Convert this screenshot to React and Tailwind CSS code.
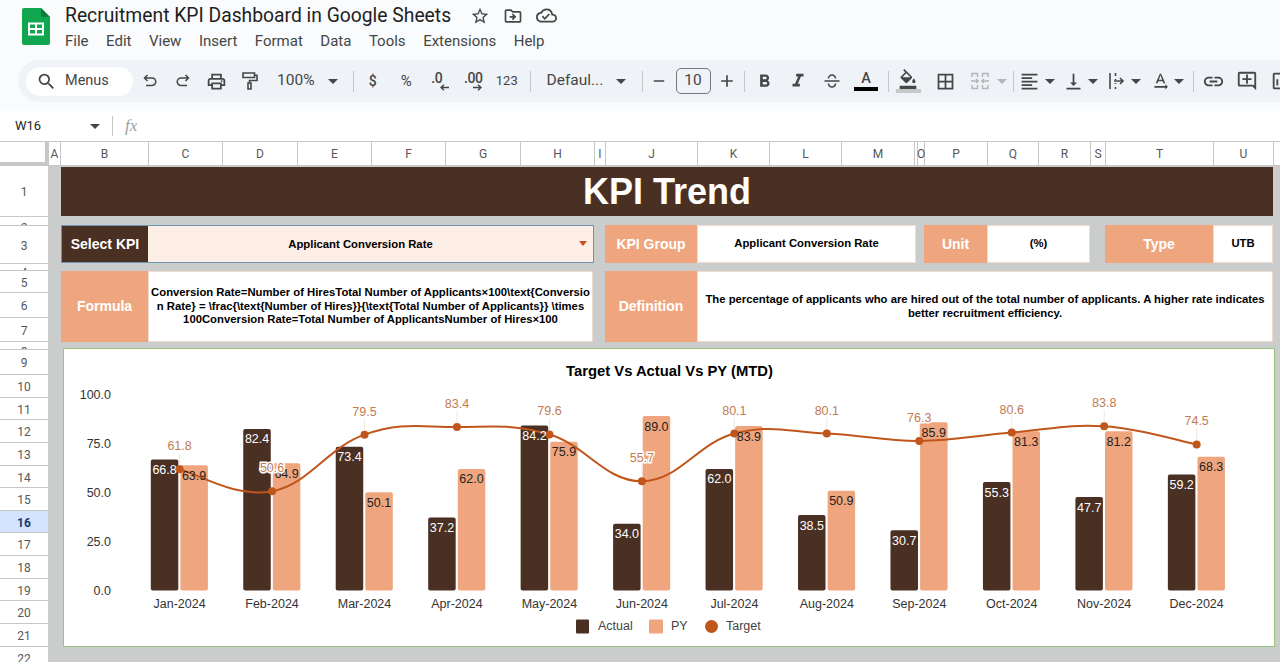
import {
  MdSearch, MdOutlinePrint, MdFormatBold, MdFormatItalic,
  MdOutlineFormatColorFill, MdBorderAll, MdFormatAlignLeft, MdVerticalAlignBottom, MdTextRotationNone, MdLink,
  MdOutlineAddComment, MdOutlineInsertChart, MdStarBorder, MdOutlineDriveFileMove, MdOutlineCloudDone, MdAdd, MdRemove,
} from 'react-icons/md';

const menus = ['File', 'Edit', 'View', 'Insert', 'Format', 'Data', 'Tools', 'Extensions', 'Help'];

const columns = [
  ['A', 12], ['B', 88], ['C', 74], ['D', 75], ['E', 74], ['F', 74], ['G', 75], ['H', 74], ['I', 11], ['J', 92],
  ['K', 72], ['L', 72], ['M', 73], ['', 3], ['O', 7], ['P', 63], ['Q', 51], ['R', 52], ['S', 15], ['T', 108], ['U', 60], ['', 10],
];

const rows = [
  [1, 51], [2, 9], [3, 38], [4, 7], [5, 22], [6, 25], [7, 24], [8, 8], [9, 25], [10, 23], [11, 22], [12, 23], [13, 23],
  [14, 22], [15, 23], [16, 22], [17, 23], [18, 23], [19, 22], [20, 23], [21, 23], [22, 22],
];

const months = ['Jan', 'Feb', 'Mar', 'Apr', 'May', 'Jun', 'Jul', 'Aug', 'Sep', 'Oct', 'Nov', 'Dec'];
const actual = [66.8, 82.4, 73.4, 37.2, 84.2, 34.0, 62.0, 38.5, 30.7, 55.3, 47.7, 59.2];
const py = [63.9, 64.9, 50.1, 62.0, 75.9, 89.0, 83.9, 50.9, 85.9, 81.3, 81.2, 68.3];
const target = [61.8, 50.6, 79.5, 83.4, 79.6, 55.7, 80.1, 80.1, 76.3, 80.6, 83.8, 74.5];

const catX = (i) => 179.6 + 92.46 * i;
const valY = (v) => 590 - 1.96 * v;

function curvePath() {
  const pts = target.map((v, i) => [catX(i), valY(v)]);
  let d = `M${pts[0][0]} ${pts[0][1]}`;
  for (let i = 0; i < pts.length - 1; i++) {
    const p0 = pts[i - 1] || pts[i];
    const p1 = pts[i];
    const p2 = pts[i + 1];
    const p3 = pts[i + 2] || p2;
    const c1 = [p1[0] + (p2[0] - p0[0]) / 5, p1[1] + (p2[1] - p0[1]) / 5];
    const c2 = [p2[0] - (p3[0] - p1[0]) / 5, p2[1] - (p3[1] - p1[1]) / 5];
    d += ` C${c1[0]} ${c1[1]} ${c2[0]} ${c2[1]} ${p2[0]} ${p2[1]}`;
  }
  return d;
}

function Caret({ className = 'text-[#444746]' }) {
  return (
    <span className={`flex w-[10px] shrink-0 justify-center ${className}`}>
      <svg width="10" height="5" viewBox="0 0 10 5"><path d="M0 0h10L5 5z" fill="currentColor" /></svg>
    </span>
  );
}

function Tool({ children, w = 'w-[33.5px]' }) {
  return <div className={`flex h-full shrink-0 items-center justify-center text-[#444746] ${w}`}>{children}</div>;
}

function Sep({ className }) {
  return <div className={`h-[21px] w-px shrink-0 bg-[#c7c7c7] ${className}`} />;
}

function Toolbar() {
  return (
    <div className="ml-[18px] flex h-[42px] w-[1300px] items-center rounded-l-[21px] bg-[#eff3f8] pl-2 font-[Roboto,sans-serif]">
      <div className="flex h-[29px] w-[107px] shrink-0 items-center rounded-full bg-white pl-[10px] text-[#444746]">
        <MdSearch size={21} />
        <span className="ml-[8px] text-[14.5px]">Menus</span>
      </div>
      <Tool>
        <svg width="18" height="18" viewBox="0 0 18 18" fill="none" stroke="currentColor" strokeWidth="1.5">
          <path d="M6.5 3 3.5 6l3 3M3.5 6H11a3.6 3.6 0 0 1 0 7.5H5" />
        </svg>
      </Tool>
      <Tool>
        <svg width="18" height="18" viewBox="0 0 18 18" fill="none" stroke="currentColor" strokeWidth="1.5">
          <path d="M11.5 3l3 3-3 3M14.5 6H7a3.6 3.6 0 0 0 0 7.5h6" />
        </svg>
      </Tool>
      <Tool><MdOutlinePrint size={21} /></Tool>
      <Tool>
        <svg width="20" height="20" viewBox="0 0 20 20" fill="none" stroke="currentColor" strokeWidth="1.6">
          <path d="M3 2h11.5v4.5H3zM14.5 4.2H17v5.3H9.5v2.5M8 12h3v6H8z" />
        </svg>
      </Tool>
      <div className="flex w-[82px] shrink-0 items-center pl-[10px] text-[15.5px] text-[#444746]">
        <span className="w-[51px]">100%</span>
        <Caret />
      </div>
      <Sep className="ml-1 mr-[2px]" />
      <Tool><span className="text-[14px] font-medium">$</span></Tool>
      <Tool><span className="text-[15px]">%</span></Tool>
      <Tool>
        <span className="relative -ml-[6px] -mt-[6px] text-[14px] font-medium tracking-[-0.5px]">
          .0
          <svg className="absolute -right-[7px] top-[16px]" width="9" height="7" viewBox="0 0 9 7"><path d="M9 3.5H2M4 .8 1 3.5 4 6.2" fill="none" stroke="currentColor" strokeWidth="1.5" /></svg>
        </span>
      </Tool>
      <Tool>
        <span className="relative -mt-[6px] text-[14px] font-medium tracking-[-0.5px]">
          .00
          <svg className="absolute right-0 top-[16px]" width="9" height="7" viewBox="0 0 9 7"><path d="M0 3.5h7M5 .8l3 2.7-3 2.7" fill="none" stroke="currentColor" strokeWidth="1.5" /></svg>
        </span>
      </Tool>
      <Tool><span className="text-[13px]">123</span></Tool>
      <Sep className="ml-[6px] mr-1" />
      <div className="flex w-[103px] shrink-0 items-center justify-between pl-3 pr-[12px] text-[15.5px] text-[#444746]">
        <span>Defaul...</span>
        <Caret />
      </div>
      <Sep className="ml-1" />
      <Tool w="w-[33px]"><MdRemove size={18} /></Tool>
      <div className="flex h-[26px] w-[35px] shrink-0 items-center justify-center rounded-[5px] border border-[#747775] text-[15.5px] text-[#444746]">10</div>
      <Tool w="w-[33px]"><MdAdd size={20} /></Tool>
      <Sep className="mr-[2.5px]" />
      <Tool w="w-[34px]"><MdFormatBold size={21} /></Tool>
      <Tool w="w-[34px]"><MdFormatItalic size={22} /></Tool>
      <Tool w="w-[34px]">
        <svg width="18" height="18" viewBox="0 0 18 18" fill="none" stroke="currentColor" strokeWidth="1.6">
          <path d="M1.5 9h15M5.5 6.5a3.5 3.5 0 0 1 7 0M5.5 11.5a3.5 3.5 0 0 0 7 0" />
        </svg>
      </Tool>
      <Tool w="w-[34px]">
        <div className="flex w-[24px] flex-col items-center">
          <span className="text-[14.5px] font-medium leading-[16px]">A</span>
          <div className="h-[4px] w-[24px] bg-black" />
        </div>
      </Tool>
      <Sep className="ml-[5px] mr-[2px]" />
      <Tool w="w-[34px]">
        <div className="flex w-[25px] flex-col items-center">
          <MdOutlineFormatColorFill size={20} />
          <div className="h-[4px] w-[25px] bg-[#c7c7c7]" />
        </div>
      </Tool>
      <Tool w="w-[34px] ml-[3px]"><MdBorderAll size={21} /></Tool>
      <Tool w="w-[34px] ml-px">
        <svg width="20" height="20" viewBox="0 0 20 20" fill="none" stroke="#b4b6b8" strokeWidth="1.5">
          <path d="M2 6V2.5h5.5V6M2 9v2M2 14v3.5h5.5V14M18 6V2.5h-5.5V6M18 9v2M18 14v3.5h-5.5V14M2 10h6M6 8l2.2 2L6 12M18 10h-6M14 8l-2.2 2 2.2 2" />
        </svg>
      </Tool>
      <Caret className="text-[#b4b6b8]" />
      <Sep className="ml-[6px]" />
      <Tool w="w-[31px]"><MdFormatAlignLeft size={21} /></Tool>
      <Caret />
      <Tool w="w-[30px] ml-[3px]"><MdVerticalAlignBottom size={21} /></Tool>
      <Caret />
      <Tool w="w-[29px] ml-1">
        <svg width="18" height="18" viewBox="0 0 18 18" fill="none" stroke="currentColor" strokeWidth="1.6">
          <path d="M2 1v16M7.5 1v3M7.5 7v1M7.5 11v1M7.5 15v2M6 9h9M12 6l3 3-3 3" />
        </svg>
      </Tool>
      <Caret />
      <Tool w="w-[28px] ml-[5px]"><MdTextRotationNone size={21} /></Tool>
      <Caret />
      <Sep className="ml-[9px] mr-[2px]" />
      <Tool w="w-[34px]"><MdLink size={23} /></Tool>
      <Tool w="w-[34px]"><MdOutlineAddComment size={22} /></Tool>
      <Tool w="w-[34px]"><MdOutlineInsertChart size={22} /></Tool>
    </div>
  );
}

function Header() {
  return (
    <div className="h-[111px] bg-[#f9fbfd] pt-[8px]">
      <div className="flex h-[37px] pl-[22px]">
        <svg width="28" height="37" viewBox="0 0 28 37" className="shrink-0">
          <path d="M2 0h17l9 9v26a2 2 0 0 1-2 2H2a2 2 0 0 1-2-2V2a2 2 0 0 1 2-2z" fill="#11a650" />
          <path d="M19 0l9 9h-9z" fill="#0c7f3d" />
          <path d="M7 15.5h14v11H7z" fill="none" stroke="#fff" strokeWidth="2" />
          <path d="M14 15.5v11M7 21h14" stroke="#fff" strokeWidth="2" />
        </svg>
        <div className="ml-[15px] -mt-[3px]">
          <div className="flex items-center text-[#444746]">
            <span className="font-[Roboto,sans-serif] text-[19.3px] leading-[16px] text-[#1f1f1f]">Recruitment KPI Dashboard in Google Sheets</span>
            <MdStarBorder size={20} className="ml-[19px]" />
            <MdOutlineDriveFileMove size={20} className="ml-[13px]" />
            <MdOutlineCloudDone size={21} className="ml-[13px]" />
          </div>
          <div className="mt-[5px] flex gap-[17.5px] font-[Roboto,sans-serif] text-[15px] leading-[20px] text-[#444746]">
            {menus.map((m) => <span key={m}>{m}</span>)}
          </div>
        </div>
      </div>
      <div className="mt-[15px]"><Toolbar /></div>
    </div>
  );
}

function FormulaBar() {
  return (
    <div className="flex h-[30px] items-center bg-white font-[Roboto,sans-serif] text-[#444746]">
      <span className="ml-[15px] w-[75px] text-[13px] text-[#1f1f1f]">W16</span>
      <Caret />
      <div className="ml-[12px] h-[20px] w-px bg-[#c7c7c7]" />
      <span className="ml-[12px] font-['Liberation_Serif',serif] text-[17px] italic text-[#9aa0a6]">fx</span>
    </div>
  );
}

function ColumnHeader() {
  return (
    <div className="flex h-[25px] border-y border-[#c7c7c7] bg-white font-[Roboto,sans-serif] text-[12px] text-[#575757]">
      <div className="w-[45px] shrink-0 border-b-[3px] border-[#c7c7c7]" />
      <div className="w-[4px] shrink-0 bg-[#c7c7c7]" />
      {columns.map(([name, w], i) => (
        <div key={i} className="flex shrink-0 items-center justify-center border-r border-[#c7c7c7]" style={{ width: w }}>
          {name}
        </div>
      ))}
    </div>
  );
}

function RowHeader() {
  return (
    <div className="w-[48px] shrink-0 bg-white font-[Roboto,sans-serif] text-[12px] text-[#575757]">
      {rows.map(([n, h]) => (
        <div
          key={n}
          className={`flex justify-center overflow-hidden border-b border-[#c7c7c7] ${h < 10 ? 'items-start' : 'items-center'} ${n === 16 ? 'bg-[#d3e3fd] font-bold text-[#1b3a6b]' : ''}`}
          style={{ height: h, paddingTop: h < 10 ? h - 7 : 2 }}
        >
          {n}
        </div>
      ))}
    </div>
  );
}

function Label({ children, className }) {
  return <div className={`flex shrink-0 items-center justify-center bg-[#efa67f] text-[14px] font-bold text-white ${className}`}>{children}</div>;
}

function Value({ children, className }) {
  return <div className={`flex items-center justify-center border border-[#efdccf] bg-white text-center text-[11.3px] font-bold leading-[13.5px] text-black ${className}`}>{children}</div>;
}

function Chart() {
  return (
    <div className="ml-[2px] mt-[6px] h-[299px] w-[1212px] border border-[#98c47c] bg-white">
      <svg width="1210" height="297" viewBox="64 348.5 1210 297" className="block" fontFamily="'Liberation Sans', sans-serif" fontSize="12.5">
        <text x="669.5" y="370" textAnchor="middle" dominantBaseline="central" fontSize="14.8" fontWeight="700" fill="#000">Target Vs Actual Vs PY (MTD)</text>

        {[100, 75, 50, 25, 0].map((v) => (
          <text key={v} x="111" y={valY(v)} textAnchor="end" dominantBaseline="central" fill="#333">{v.toFixed(1)}</text>
        ))}

        {months.map((m, i) => (
          <g key={m}>
            <rect x={catX(i) - 28.8} y={valY(actual[i])} width="27.5" height={actual[i] * 1.96} rx="2" fill="#4a2f23" />
            <rect x={catX(i) + 0.8} y={valY(py[i])} width="27.5" height={py[i] * 1.96} rx="2" fill="#efa67f" />
            <text x={catX(i)} y="603" textAnchor="middle" dominantBaseline="central" fill="#333">{m}-2024</text>
            <line x1={catX(i)} x2={catX(i)} y1={valY(target[i]) - 16} y2={valY(target[i])} stroke="#e9d6ca" strokeWidth="0.6" />
          </g>
        ))}

        <path d={curvePath()} fill="none" stroke="#c0561c" strokeWidth="2" />
        {target.map((v, i) => <circle key={i} cx={catX(i)} cy={valY(v)} r="4" fill="#c0561c" />)}

        {months.map((m, i) => (
          <g key={m}>
            <text x={catX(i) - 15} y={valY(actual[i]) + 10.5} textAnchor="middle" dominantBaseline="central" fill="#fff">{actual[i].toFixed(1)}</text>
            <text x={catX(i) + 14.5} y={valY(py[i]) + 10.5} textAnchor="middle" dominantBaseline="central" fill="#222">{py[i].toFixed(1)}</text>
            <text x={catX(i)} y={valY(target[i]) - 23} textAnchor="middle" dominantBaseline="central" fill="#c27b54" stroke="#fff" strokeWidth="3" paintOrder="stroke">{target[i].toFixed(1)}</text>
          </g>
        ))}

        <rect x="576" y="619" width="13" height="14" rx="1" fill="#4a2f23" />
        <text x="598" y="625.5" dominantBaseline="central" fill="#444">Actual</text>
        <rect x="649" y="619" width="14" height="14" rx="1" fill="#efa67f" />
        <text x="671" y="625.5" dominantBaseline="central" fill="#444">PY</text>
        <circle cx="711.5" cy="626" r="6.5" fill="#c0561c" />
        <text x="726" y="625.5" dominantBaseline="central" fill="#444">Target</text>
      </svg>
    </div>
  );
}

function Dashboard() {
  return (
    <div className="w-[1232px] shrink-0 bg-[#cbcccc] pl-[13px] pt-px font-['Liberation_Sans',sans-serif]">
      <div className="flex h-[49px] w-[1212px] items-center justify-center bg-[#4a2f23] text-[36px] font-bold text-white">KPI Trend</div>

      <div className="mt-[9px] flex h-[38px] w-[1212px]">
        <div className="flex w-[533px] shrink-0 border border-[#6b93b8]">
          <div className="flex w-[86px] shrink-0 items-center justify-center bg-[#4a2f23] text-[14px] font-bold text-white">Select KPI</div>
          <div className="relative flex grow items-center justify-center bg-[#fdeee6] pr-[20px] text-[11.3px] font-bold text-black">
            Applicant Conversion Rate
            <span className="absolute right-[6px] top-[15px] text-[#d0491c]">
              <svg width="8" height="5" viewBox="0 0 8 5" className="block"><path d="M0 0h8L4 5z" fill="currentColor" /></svg>
            </span>
          </div>
        </div>
        <Label className="ml-[11px] w-[92px]">KPI Group</Label>
        <Value className="w-[219px] shrink-0">Applicant Conversion Rate</Value>
        <Label className="ml-2 w-[63px]">Unit</Label>
        <Value className="w-[103px] shrink-0">(%)</Value>
        <Label className="ml-[15px] w-[108px]">Type</Label>
        <Value className="w-[60px] shrink-0">UTB</Value>
      </div>

      <div className="mt-2 flex h-[71px] w-[1212px]">
        <Label className="w-[87px]">Formula</Label>
        <Value className="w-[445px] shrink-0 flex-col">
          <span>Conversion Rate=Number of HiresTotal Number of Applicants×100\text{'{'}Conversio</span>
          <span>n Rate{'}'} = \frac{'{'}\text{'{'}Number of Hires{'}'}{'}'}{'{'}\text{'{'}Total Number of Applicants{'}'}{'}'} \times</span>
          <span>100Conversion Rate=Total Number of ApplicantsNumber of Hires×100</span>
        </Value>
        <Label className="ml-3 w-[92px]">Definition</Label>
        <Value className="grow px-1">The percentage of applicants who are hired out of the total number of applicants. A higher rate indicates better recruitment efficiency.</Value>
      </div>

      <Chart />
    </div>
  );
}

export default function App() {
  return (
    <div className="h-[662px] w-[1280px] overflow-hidden bg-white">
      <Header />
      <FormulaBar />
      <ColumnHeader />
      <div className="flex">
        <RowHeader />
        <Dashboard />
      </div>
    </div>
  );
}
